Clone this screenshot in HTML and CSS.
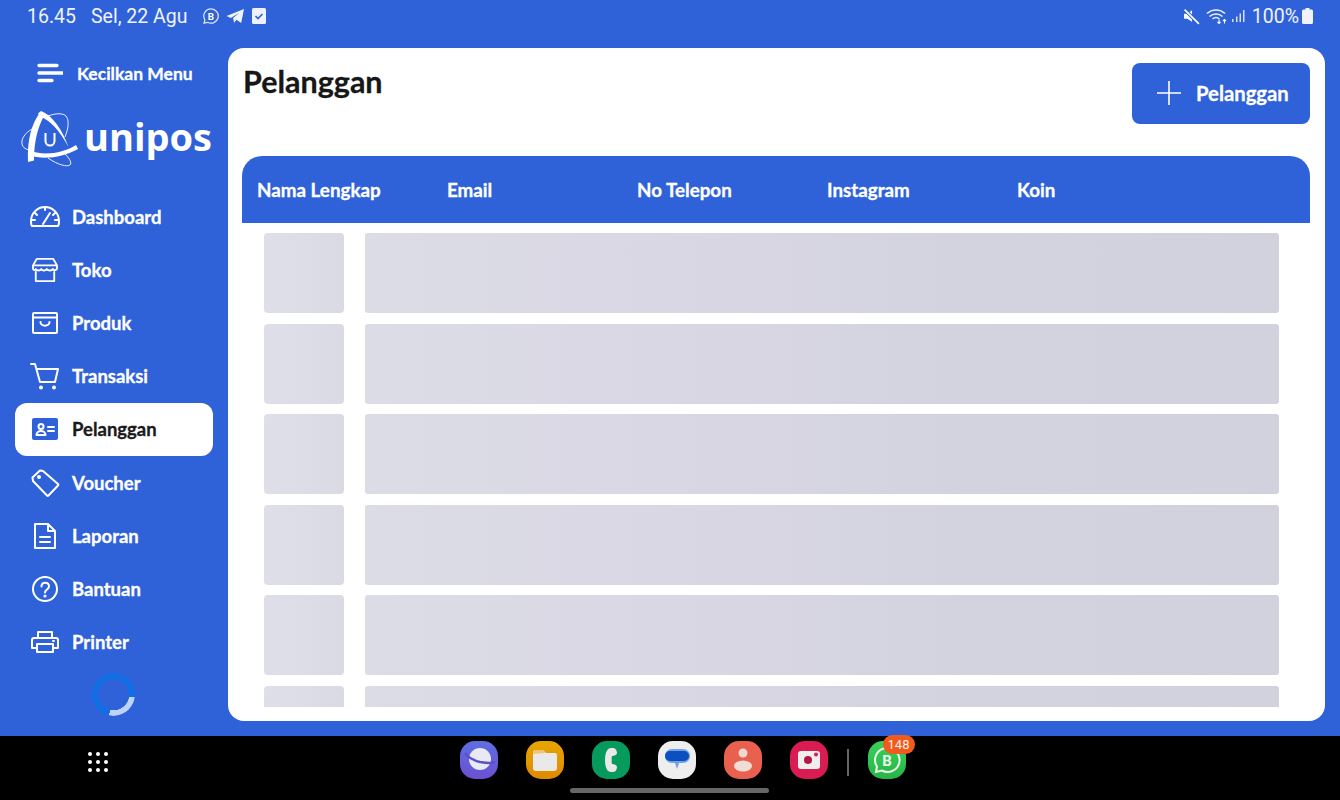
FILE: index.html
```html
<!DOCTYPE html>
<html lang="id">
<head>
<meta charset="utf-8">
<title>Pelanggan</title>
<link rel="stylesheet" href="styles.css">
</head>
<body>
<div class="screen">
  <div class="app">
    <header class="status">
      <span class="time">16.45</span>
      <span class="date">Sel, 22 Agu</span>
      <svg class="st-b" viewBox="0 0 20 20"><path d="M10 2a8 8 0 0 0-6.800 12.200L2.300 18l3.900-1A8 8 0 1 0 10 2z" fill="none" stroke="#fff" stroke-opacity=".85" stroke-width="1.400"/><text x="10" y="14" text-anchor="middle" class="st-b-t">B</text></svg>
      <svg class="st-t" viewBox="0 0 20 18"><path d="M0.500 8.500 19 1l-3 15-5-3.500-2.500 3-1-5L14 5 5 10.500z" fill="#fff" fill-opacity=".92"/></svg>
      <svg class="st-c" viewBox="0 0 14 16"><rect width="14" height="16" rx="1.500" fill="#eef1fb"/><path d="M3.500 8l2.500 2.500 4.500-4.500" fill="none" stroke="#2f62d9" stroke-width="1.600"/></svg>
      <span class="spacer"></span>
      <svg class="st-m" viewBox="0 0 16 16"><path d="M1 5.500h3L8.500 2v11L4 10H1z" fill="#fff"/><path d="M1.500 1.500 15 15" stroke="#2f62d9" stroke-width="3.400"/><path d="M1.500 1.500 15 15" stroke="#fff" stroke-width="1.500"/></svg>
      <svg class="st-w" viewBox="0 0 22 18"><path d="M1 6.500a13 13 0 0 1 18 0M3.500 9.500a9.500 9.500 0 0 1 13 0M6.500 12a5.500 5.500 0 0 1 7 0" fill="none" stroke="#fff" stroke-opacity=".9" stroke-width="1.500"/><path d="M13 12.500v4M11.500 15l1.500 1.500 1.500-1.500M18.500 16.500v-4M17 14l1.500-1.500L20 14" fill="none" stroke="#fff" stroke-width="1.100"/></svg>
      <svg class="st-s" viewBox="0 0 14 14"><path d="M1 10h1.500v3H1zM5 7.500h1.500V13H5zM8.500 4.500H10V13H8.500zM12 1h1.500v12H12z" fill="#fff" fill-opacity=".8"/></svg>
      <span class="pct">100%</span>
      <svg class="st-bat" viewBox="0 0 11 16"><path d="M3.500 0h4v1.500h2A1.500 1.500 0 0 1 11 3v11.500a1.500 1.500 0 0 1-1.500 1.500h-8A1.500 1.500 0 0 1 0 14.500V3a1.500 1.500 0 0 1 1.500-1.500h2z" fill="#f1f3fb"/></svg>
    </header>
    <div class="body">
      <aside class="sidebar">
        <div class="toggle">
          <svg class="toggle-icon" viewBox="0 0 26 20"><path d="M2 2.500h18M2 10h23.500M2 17.500h13" stroke="#fff" stroke-width="3.400" stroke-linecap="round"/></svg>
          <span>Kecilkan Menu</span>
        </div>
        <div class="logo">
          <svg class="emblem" viewBox="0 0 60 56" fill="none" stroke="#fff">
            <path d="M18 2.500 21 0C32 4 42 18 48.500 36 40 20 30 9 20 5.500z" fill="#fff" stroke="none"/>
            <path d="M20 1.500C12 12 7 28 8 51l6-1.500C14 30 18 16 24 5z" fill="#fff" stroke="none"/>
            <path d="M8 39c14 6 34 4 48-5l2 4C42 47 22 49 9 44z" fill="#fff" stroke="none"/>
            <path d="M12 18C5 22 1 28 2 33c.5 3 3 5 7 6" stroke-width=".9"/>
            <path d="M28 5c8-3 15-3 18 0 3 4 3 11-1 21" stroke-width=".9"/>
            <path d="M45 43c5 5 7 9 5 11-3 2-12 0-22-7" stroke-width=".9"/>
            <path d="M25.500 22v8a4.500 4.500 0 0 0 9 0v-8" stroke-width="2"/>
          </svg>
          <span class="logo-text">unipos</span>
        </div>
        <nav class="menu">
          <a class="item"><svg class="ico" viewBox="0 0 30 24"><path d="M2 21h26c1-1 1-3 1-5A14 14 0 0 0 1 16c0 2 0 4 1 5zM15 2v3M5 8l2 2M25 8l-2 2M2 15h3M25 15h3M13 19l7-11" /></svg><span>Dashboard</span></a>
          <a class="item"><svg class="ico" viewBox="0 0 28 26"><path d="M5 1h18l4 7v3c0 2-3 3-4.500 1-1.500 2-5 2-6.500 0-1.500 2-5 2-6 0-1.500 2-4.500 2-6 0C3 14 1 13 1 11V8zM1 8h26M4 15v10h20V15"/></svg><span>Toko</span></a>
          <a class="item"><svg class="ico" viewBox="-2 -1 30 24"><rect x="1" y="1" width="24" height="20" rx="1"/><path d="M1 5.500h24M8.500 10c0 5 9 5 9 0"/></svg><span>Produk</span></a>
          <a class="item"><svg class="ico ico-cart" viewBox="0 0 30 27"><path d="M1 1h4l5 18h15l3-13H7"/><circle cx="11" cy="24.500" r="1" /><circle cx="24" cy="24.500" r="1"/></svg><span>Transaksi</span></a>
          <a class="item active"><svg class="ico" viewBox="-2 -1 30 24"><rect width="26" height="22" rx="2" fill="#2f62d9" stroke="none"/><circle cx="9" cy="8.500" r="2.500" stroke="#fff"/><path d="M4.500 17c0-5.500 9-5.500 9 0zM16 9h6M16 13h6" stroke="#fff"/></svg><span>Pelanggan</span></a>
          <a class="item"><svg class="ico ico-tag" viewBox="0 0 30 28"><path d="M2.500 8.500 10 1.500l3 .5L28 15c.5.500.5 1 0 1.500l-9.500 10c-.5.500-1 .5-1.500 0L3 12z"/><circle cx="9" cy="8" r="1" fill="#fff"/></svg><span>Voucher</span></a>
          <a class="item"><svg class="ico ico-doc" viewBox="-4 0 30 26"><path d="M1 1h13l7 7v17H1zM14 1v7h7M6 14h10M6 19h10"/></svg><span>Laporan</span></a>
          <a class="item"><svg class="ico ico-help" viewBox="-2 0 30 26"><circle cx="13" cy="13" r="12"/><path d="M9.500 10.500c0-5 7.500-5 7.500 0 0 3-4 3-4 6"/><circle cx="13" cy="20" r=".6"/></svg><span>Bantuan</span></a>
          <a class="item"><svg class="ico" viewBox="-1 -1 30 24"><path d="M7 7V1h14v6M6 17H1V9c0-1 1-2 2-2h22c1 0 2 1 2 2v8h-5M6 13v8h16v-8zM22 10h1"/></svg><span>Printer</span></a>
        </nav>
        <div class="spinner"></div>
      </aside>
      <main class="panel">
        <div class="panel-head">
          <h1>Pelanggan</h1>
          <button class="add"><svg class="plus" viewBox="0 0 24 24"><path d="M12 0v24M0 12h24" stroke="#fff" stroke-width="1.600"/></svg><span>Pelanggan</span></button>
        </div>
        <div class="thead">
          <span>Nama Lengkap</span><span>Email</span><span>No Telepon</span><span>Instagram</span><span>Koin</span>
        </div>
        <div class="rows">
          <div class="row"><div class="sk sk-a"></div><div class="sk sk-b"></div></div>
          <div class="row"><div class="sk sk-a"></div><div class="sk sk-b"></div></div>
          <div class="row"><div class="sk sk-a"></div><div class="sk sk-b"></div></div>
          <div class="row"><div class="sk sk-a"></div><div class="sk sk-b"></div></div>
          <div class="row"><div class="sk sk-a"></div><div class="sk sk-b"></div></div>
          <div class="row"><div class="sk sk-a"></div><div class="sk sk-b"></div></div>
        </div>
      </main>
    </div>
  </div>
  <footer class="navbar">
    <div class="dock-row">
      <svg class="grid" viewBox="0 0 22 22"><g fill="#fff"><circle cx="3" cy="3" r="2"/><circle cx="11" cy="3" r="2"/><circle cx="19" cy="3" r="2"/><circle cx="3" cy="11" r="2"/><circle cx="11" cy="11" r="2"/><circle cx="19" cy="11" r="2"/><circle cx="3" cy="19" r="2"/><circle cx="11" cy="19" r="2"/><circle cx="19" cy="19" r="2"/></g></svg>
      <div class="dock">
        <div class="app-ic ic-net"><svg viewBox="0 0 38 38"><circle cx="20" cy="18" r="11" fill="#e9e9f3"/><path d="M6 12c-1 3 9 8 14 9 6 1 14 2 14-1" fill="none" stroke="#5b50c8" stroke-width="2.600"/></svg></div>
        <div class="app-ic ic-files"><svg viewBox="0 0 38 38"><path d="M7 12c0-2 1-3 3-3h7l3 3h9c1.500 0 2 1 2 3v12c0 2-1 3-3 3H10c-2 0-3-1-3-3z" fill="#e9e9e9"/><path d="M7 13c0-3 1-4 3-4h7l2 3z" fill="#f2c46f"/></svg></div>
        <div class="app-ic ic-phone"><svg viewBox="0 0 38 38"><path d="M19 7h2c2 0 4 2 4 5 0 2-3 3-5 3-.5 1-.5 7 0 8 2 0 5 1 5 3 0 3-2 5-4 5h-2c-4 0-6-5-6-12s2-12 6-12z" fill="#e9e9e9"/></svg></div>
        <div class="app-ic ic-msg"><svg viewBox="0 0 38 38"><path d="M14 8h11c4 0 7 3 7 7s-3 7-7 7h-4l-2 6-2-6h-3c-4 0-7-3-7-7s3-7 7-7z" fill="#6fa0e8"/><rect x="7" y="10" width="24" height="10" rx="5" fill="#0b4fc0"/></svg></div>
        <div class="app-ic ic-contact"><svg viewBox="0 0 38 38"><circle cx="19" cy="12" r="4.500" fill="#f1d9d2"/><ellipse cx="19" cy="25" rx="9" ry="5.500" fill="#f1ddd6"/></svg></div>
        <div class="app-ic ic-cam"><svg viewBox="0 0 38 38"><rect x="8" y="10" width="22" height="18" rx="3" fill="#eee"/><circle cx="18" cy="19" r="4" fill="#b51545"/><circle cx="26" cy="13.500" r="2" fill="#d81b50"/></svg></div>
        <div class="divider"></div>
        <div class="app-ic ic-wa"><svg viewBox="0 0 38 38"><path d="M19 7a12 12 0 0 0-10 18.500L8 31l5.800-1.500A12 12 0 1 0 19 7z" fill="none" stroke="#eaf7ea" stroke-width="2"/><text x="19" y="25" text-anchor="middle" class="wa-b">B</text></svg><span class="badge">148</span></div>
      </div>
    </div>
    <div class="homebar"></div>
  </footer>
</div>
</body>
</html>
```
FILE: styles.css
```css
* { box-sizing: border-box; }
html, body { margin: 0; padding: 0; }
body { width: 1340px; height: 800px; overflow: hidden; font-family: "Lato", "Liberation Sans", sans-serif; }
.screen { display: flex; flex-direction: column; width: 1340px; height: 800px; }
.app { height: 736px; background: #2f62d9; display: flex; flex-direction: column; }

.status { height: 32px; display: flex; align-items: center; padding: 0 27px 0 27px; color: #f0f3fc; font-family: Roboto, sans-serif; font-size: 19.500px; }
.date { margin-left: 15px; }
.spacer { flex: 1; }
.st-b { width: 18px; height: 18px; margin-left: 14px; }
.st-b-t { font: 700 11px Roboto, sans-serif; fill: #fff; }
.st-t { width: 19px; height: 17px; margin-left: 6px; }
.st-c { width: 14px; height: 16px; margin-left: 7px; }
.st-m { width: 17px; height: 17px; }
.st-w { width: 22px; height: 18px; margin-left: 6px; }
.st-s { width: 14px; height: 14px; margin-left: 3px; }
.pct { margin-left: 7px; }
.st-bat { width: 11px; height: 16px; margin-left: 3px; }

.body { flex: 1; display: flex; min-height: 0; }
.sidebar { width: 228px; flex: none; display: flex; flex-direction: column; padding-left: 15px; }
.toggle { height: 26px; margin-top: 28px; display: flex; align-items: center; padding-left: 22px; color: #fff; font-weight: 700; font-size: 17.500px; gap: 14px; -webkit-text-stroke: .3px currentColor; }
.toggle-icon { width: 26px; height: 20px; }
.logo { display: flex; align-items: center; margin: 25px 0 0 5px; height: 56px; }
.emblem { width: 60px; height: 56px; flex: none; }
.logo-text { font-family: "Open Sans", sans-serif; font-weight: 700; font-size: 38px; color: #fff; margin-left: 4px; line-height: 1; padding-bottom: 6px; }

.menu { display: flex; flex-direction: column; margin-top: 23px; }
.item { height: 53.200px; width: 198px; display: flex; align-items: center; padding-left: 15px; color: #fff; font-weight: 700; font-size: 18.500px; border-radius: 12px; -webkit-text-stroke: .3px currentColor; }
.item span { margin-left: 12px; }
.item.active { background: #fff; color: #1a1a1a; }
.ico { width: 30px; height: 24px; flex: none; fill: none; stroke: #fff; stroke-width: 2; stroke-linejoin: round; stroke-linecap: round; }
.ico-cart { height: 27px; }
.ico-tag { height: 28px; }
.ico-doc { height: 26px; }
.ico-help { height: 26px; }
.spinner { width: 43px; height: 43px; margin: 4px 0 0 77px; border-radius: 50%; background: conic-gradient(#0f6fe6 0 98deg, #bcd4fb 98deg 192deg, #0f6fe6 192deg); -webkit-mask: radial-gradient(circle, transparent 15.500px, #000 16px); mask: radial-gradient(circle, transparent 15.500px, #000 16px); }

.panel { width: 1097px; height: 673px; margin-top: 16px; background: #fff; border-radius: 16px; padding: 15px 15px 14px 14px; display: flex; flex-direction: column; }
.panel-head { display: flex; justify-content: space-between; align-items: flex-start; height: 93px; }
.panel-head h1 { margin: 0; padding: 0 0 0 1px; font-size: 30.500px; font-weight: 700; color: #171717; line-height: 36px; -webkit-text-stroke: .3px currentColor; }
.add { width: 178px; height: 61px; background: #2f62d9; border: 0; border-radius: 8px; color: #fff; font: 700 20.300px "Lato", sans-serif; display: flex; align-items: center; padding: 0 0 2px 25px; gap: 15px; -webkit-text-stroke: .3px currentColor; }
.plus { width: 24px; height: 24px; }
.thead { height: 67px; flex: none; background: #2f62d9; border-radius: 20px 20px 0 0; color: #fff; font-weight: 700; font-size: 18.800px; display: grid; grid-template-columns: repeat(5, 190px); align-items: center; padding-left: 15px; -webkit-text-stroke: .3px currentColor; }
.rows { flex: 1; min-height: 0; overflow: hidden; padding: 10px 0 0 22px; display: flex; flex-direction: column; gap: 10.500px; }
.row { display: flex; gap: 21px; flex: none; }
.sk { height: 80px; border-radius: 4px; }
.sk-a { width: 80px; background: linear-gradient(90deg, #dfdfe9, #dadae5); }
.sk-b { width: 914px; background: linear-gradient(90deg, #dcdce7 0%, #d8d7e3 35%, #d3d2df 65%, #d2d1de 100%); border-radius: 3px; }

.navbar { height: 64px; background: #000; display: flex; flex-direction: column; }
.dock-row { height: 52px; display: flex; padding: 5px 0 0 87px; }
.grid { width: 22px; height: 22px; margin-top: 10px; }
.dock { display: flex; align-items: flex-start; margin-left: 351px; gap: 28px; }
.app-ic { width: 38px; height: 38px; border-radius: 15px; position: relative; }
.app-ic svg { display: block; width: 38px; height: 38px; }
.ic-net { background: linear-gradient(#5f6ee0, #6a50d2); }
.ic-files { background: linear-gradient(#e6a600, #e08a00); }
.ic-phone { background: #069a5c; }
.ic-msg { background: #eeeeee; }
.ic-contact { background: #e9604e; }
.ic-cam { background: #d91d52; }
.ic-wa { background: linear-gradient(#3bd05a, #27b548); margin-left: -9px; }
.divider { width: 1.500px; height: 27px; margin: 8px 0 0 -9px; background: #666; }
.wa-b { font: 700 15px Roboto, sans-serif; fill: #eaf7ea; }
.badge { position: absolute; top: -6px; left: 15px; width: 32px; height: 19px; border-radius: 10px; background: #f25a1c; color: #f7f0ea; font: 400 13px/19px Roboto, sans-serif; text-align: center; }
.homebar { width: 199px; height: 5px; border-radius: 3px; background: #666; margin: 0 0 0 570px; }
```
